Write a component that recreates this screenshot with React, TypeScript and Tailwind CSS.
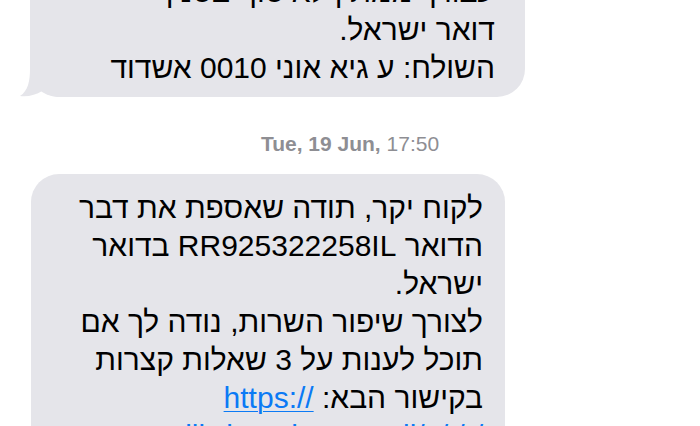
import React from 'react';

const bubbleLines = [
  'לקוח יקר, תודה שאספת את דבר',
  'הדואר RR925322258IL בדואר',
  'ישראל.',
  'לצורך שיפור השרות, נודה לך אם',
  'תוכל לענות על 3 שאלות קצרות',
];

const App: React.FC = () => {
  return (
    <div
      className="h-[426px] w-[700px] overflow-hidden bg-white text-black"
      style={{ fontFamily: '"Liberation Sans", "DejaVu Sans", sans-serif' }}
    >
      {/* Previous message (cut off at top) */}
      <div className="relative -mt-[44px] ml-[30px] w-[495px]">
        <div
          dir="rtl"
          className="rounded-[28px] bg-[#e5e5ea] pt-[17px] pb-[10px] pr-[30px] pl-[20px] text-right text-[30px] leading-[38px]"
        >
          <div>עבורך ממתין לאיסוף בסניף</div>
          <div>דואר ישראל.</div>
          <div>השולח: ע גיא אוני 0010 אשדוד</div>
        </div>
        {/* Tail */}
        <svg
          className="absolute -left-[12px] bottom-0"
          width="40"
          height="28"
          viewBox="0 0 40 28"
        >
          <path
            d="M12 0 C12 12 10 22 2 27 C10 28 18 26 24 22 C28 25 33 27 40 28 L40 0 Z"
            fill="#e5e5ea"
          />
        </svg>
      </div>

      {/* Timestamp */}
      <div className="mt-[35px] text-center text-[21px] leading-[24px] text-[#8e8e93]">
        <span className="font-semibold">Tue, 19 Jun,</span> <span>17:50</span>
      </div>

      {/* Current message */}
      <div className="ml-[31px] mt-[18px] w-[474px]">
        <div
          dir="rtl"
          className="rounded-[28px] bg-[#e5e5ea] pt-[15px] pb-[16px] pr-[22px] pl-[16px] text-right text-[30px] leading-[38px]"
        >
          {bubbleLines.map((line, i) => (
            <div key={i}>{line}</div>
          ))}
          <div>
            בקישור הבא:{' '}
            <span dir="ltr" className="text-[#0b7af5] underline decoration-1 underline-offset-[3px]">
              https://
            </span>
          </div>
          <div dir="ltr" className="text-right text-[#0b7af5] underline decoration-1">
            mtiliv.israelpost.co.il/s/t/r/
          </div>
        </div>
      </div>
    </div>
  );
};

export default App;
